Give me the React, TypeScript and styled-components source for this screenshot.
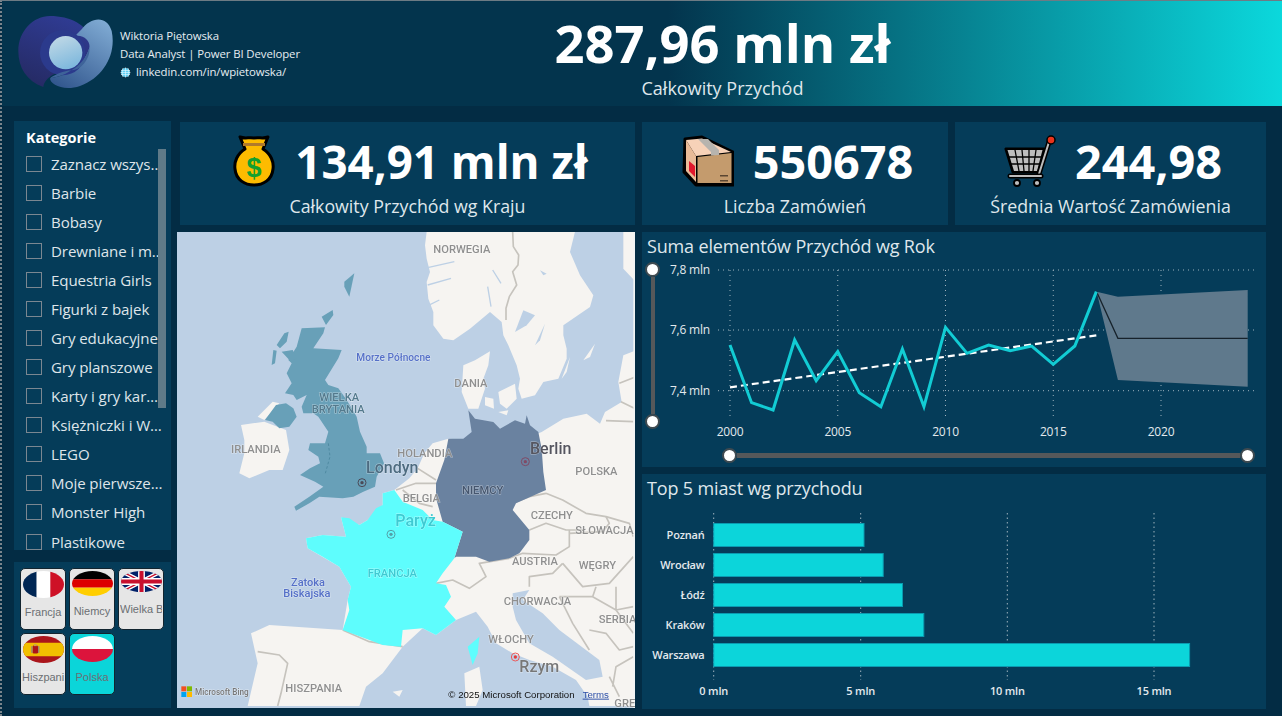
import React from "react";
import styled, { createGlobalStyle } from "styled-components";

const FONT = `"Open Sans", "Noto Sans", sans-serif`;

const GlobalStyle = createGlobalStyle`
  html, body {
    margin: 0;
    padding: 0;
    background: #032c44;
    font-family: ${FONT};
  }
  * {
    box-sizing: border-box;
  }
`;

const categories = [
  "Zaznacz wszystko",
  "Barbie",
  "Bobasy",
  "Drewniane i modele",
  "Equestria Girls",
  "Figurki z bajek",
  "Gry edukacyjne",
  "Gry planszowe",
  "Karty i gry karciane",
  "Księżniczki i Wróżki",
  "LEGO",
  "Moje pierwsze zabawki",
  "Monster High",
  "Plastikowe",
];

// lata 2000-2017, wartosci w pikselach ekranu
const revenue = [345, 518, 540, 330, 452, 365, 488, 530, 357, 530, 292, 370, 345, 362, 348, 403, 348, 185];
const yearX = (i: number) => 70 + i * 21.55;
const linePoints = revenue.map((v, i) => `${yearX(i)},${v / 3 + 230 - 262}`).join(" ");

const cities = [
  { name: "Poznań", end: 864 },
  { name: "Wrocław", end: 883.2 },
  { name: "Łódź", end: 902.5 },
  { name: "Kraków", end: 923.8 },
  { name: "Warszawa", end: 1189.6 },
];

const Page = styled.div`
  position: relative;
  width: 1282px;
  height: 716px;
  overflow: hidden;
  background: #032c44;
  border-top: 1px solid #6d7b84;
  border-left: 2px dotted #7a858c;
`;

const Header = styled.header`
  height: 105px;
  display: flex;
  align-items: flex-start;
  background: linear-gradient(90deg, #03344d 0%, #03344d 52%, #0bd8dc 100%);
`;

const Brand = styled.div`
  width: 500px;
  display: flex;
  align-items: flex-start;
  padding: 14px 0 0 16px;
  gap: 6px;
`;

const Logo = styled.svg`
  width: 96px;
  height: 76px;
  flex: none;
`;

const BrandText = styled.div`
  display: flex;
  flex-direction: column;
  padding-top: 12px;
  color: #e6edf2;
  font-size: 11.4px;
  line-height: 18px;
  font-weight: 500;
  letter-spacing: -0.1px;
`;

const LinkRow = styled.div`
  display: flex;
  align-items: center;
  gap: 5px;
`;

const Total = styled.div`
  width: 441px;
  display: flex;
  flex-direction: column;
  align-items: center;
`;

const TotalValue = styled.div`
  color: #fff;
  font-size: 52.5px;
  line-height: 68px;
  margin-top: 8px;
  font-weight: 700;
  white-space: nowrap;
`;

const TotalLabel = styled.div`
  color: #dfe7ec;
  font-size: 18px;
  line-height: 24px;
  margin-top: -1px;
`;

const Main = styled.main`
  display: grid;
  grid-template-columns: 157px 1fr;
  column-gap: 6px;
  padding: 15px 0 0 12px;
`;

const Side = styled.aside`
  display: flex;
  flex-direction: column;
  gap: 12px;
`;

const Panel = styled.section`
  background: #053c59;
`;

const CategoryPanel = styled(Panel)`
  position: relative;
  height: 429px;
  overflow: hidden;
  padding: 7px 0 0 12px;
`;

const SlicerTitle = styled.div`
  color: #fff;
  font-size: 14.5px;
  font-weight: 700;
  line-height: 20px;
  margin-bottom: 1px;
`;

const CategoryRow = styled.div`
  display: flex;
  align-items: center;
  height: 29.08px;
  gap: 9px;
`;

const Checkbox = styled.span`
  width: 16px;
  height: 16px;
  flex: none;
  border: 1px solid #7b8791;
`;

const CategoryName = styled.span`
  width: 113px;
  color: #dfe5ea;
  font-size: 15.1px;
  letter-spacing: -0.1px;
  white-space: nowrap;
  overflow: hidden;
  text-overflow: ellipsis;
`;

const ScrollThumb = styled.div`
  position: absolute;
  left: 144px;
  top: 28px;
  width: 8px;
  height: 259px;
  background: #5f7a88;
`;

const FlagPanel = styled(Panel)`
  height: 146px;
  padding: 6px 0 0 6px;
  display: grid;
  grid-template-columns: repeat(3, 46px);
  grid-auto-rows: 62px;
  column-gap: 3px;
  row-gap: 3px;
`;

const FlagTile = styled.button<{ $active?: boolean }>`
  display: flex;
  flex-direction: column;
  align-items: center;
  padding: 2px 1px 0;
  overflow: hidden;
  border: 1px solid #12242f;
  border-radius: 5px;
  background: ${(p) => (p.$active ? "#0bd5d9" : "#e6e6e6")};
`;

const FlagShape = styled.svg<{ $h: number }>`
  width: 41px;
  height: ${(p) => p.$h}px;
  flex: none;
  border-radius: 50%;
`;

const FlagName = styled.span`
  flex: 1;
  width: 100%;
  display: flex;
  align-items: center;
  justify-content: center;
  padding-bottom: 3px;
  font-family: "Liberation Sans", Arial, sans-serif;
  font-size: 11px;
  color: #6b6f73;
  white-space: nowrap;
  overflow: hidden;
`;

const FlagNameClipped = styled(FlagName)`
  justify-content: flex-start;
`;

const Content = styled.div`
  display: flex;
  flex-direction: column;
`;

const KpiRow = styled.div`
  height: 103px;
  margin: 1px 0 0 3px;
  display: grid;
  grid-template-columns: 455px 306px 311px;
  column-gap: 7px;
  column-gap: 7px;
`;

const Kpi = styled(Panel)`
  display: flex;
  flex-direction: column;
  align-items: center;
  justify-content: flex-start;
  padding-top: 7px;
`;

const KpiMain = styled.div<{ $gap: number; $shift: number }>`
  display: flex;
  align-items: center;
  gap: ${(p) => p.$gap}px;
  height: 64px;
  margin-left: ${(p) => p.$shift}px;
`;

const KpiIcon = styled.svg<{ $w: number }>`
  width: ${(p) => p.$w}px;
  height: 52px;
  flex: none;
`;

const KpiValue = styled.div<{ $size: number }>`
  color: #fff;
  font-size: ${(p) => p.$size}px;
  font-weight: 700;
  white-space: nowrap;
`;

const KpiLabel = styled.div`
  color: #dfe7ec;
  font-size: 17.8px;
  line-height: 24px;
  margin-top: 1px;
  white-space: nowrap;
`;

const Lower = styled.div`
  margin-top: 7px;
  display: grid;
  grid-template-columns: 458px 624px;
  column-gap: 7px;
`;

const MapFrame = styled.svg`
  display: block;
  width: 458px;
  height: 476px;
  background: #bdd0e5;
  filter: blur(0.35px);
`;

const Charts = styled.div`
  display: flex;
  flex-direction: column;
  gap: 7px;
`;

const ChartPanel = styled(Panel)`
  height: 235px;
  display: flex;
  flex-direction: column;
`;

const ChartTitle = styled.div`
  height: 30px;
  padding: 2px 0 0 5px;
  color: #dfe7ec;
  font-size: 18px;
  line-height: 24px;
  letter-spacing: -0.15px;
`;

const ChartBody = styled.div`
  display: flex;
  height: 178px;
`;

const VSlider = styled.div`
  width: 15px;
  height: 167px;
  margin-left: 3px;
  flex: none;
  display: flex;
  flex-direction: column;
  align-items: center;
`;

const HSlider = styled.div`
  margin: 8px 11px 0 80px;
  display: flex;
  align-items: center;
`;

const Thumb = styled.span`
  width: 15px;
  height: 15px;
  flex: none;
  border-radius: 50%;
  background: #fff;
  border: 2px solid #3f4a50;
`;

const VTrack = styled.span`
  width: 4px;
  flex: 1;
  background: #55585a;
`;

const HTrack = styled.span`
  height: 5px;
  flex: 1;
  background: #55585a;
`;

const PlotSvg = styled.svg`
  display: block;
  flex: none;
`;

const AxisText = styled.text<{ $strong?: boolean }>`
  font-family: ${FONT};
  font-size: ${(p) => (p.$strong ? 11 : 12)}px;
  font-weight: ${(p) => (p.$strong ? 600 : 400)};
  fill: #e3e9ed;
  letter-spacing: -0.2px;
`;

const MapLabel = styled.text<{ $color?: string; $size?: number }>`
  font-family: Roboto, "Liberation Sans", sans-serif;
  font-size: ${(p) => p.$size ?? 33.5}px;
  font-weight: 500;
  fill: ${(p) => p.$color ?? "#8f8f8f"};
  stroke: rgba(255, 255, 255, 0.45);
  stroke-width: 3px;
  paint-order: stroke;
`;

const Attribution = styled.text<{ $link?: boolean }>`
  font-family: "Liberation Sans", Arial, sans-serif;
  font-size: 29px;
  fill: ${(p) => (p.$link ? "#2c4fa8" : "#111")};
  text-decoration: ${(p) => (p.$link ? "underline" : "none")};
`;

const MoneyBag = () => (
  <KpiIcon $w={42} viewBox="0 0 42 52">
    <path
      d="M7 2 C12 4 16 2 21 3 C26 2 30 4 35 2 L30 14 C38 19 41 27 40 34 C39 45 30 50 21 50 C12 50 3 45 2 34 C1 27 4 19 12 14 Z"
      fill="#fdbb00"
      stroke="#000"
      strokeWidth="3"
      strokeLinejoin="round"
    />
    <rect x="10" y="8" width="22" height="3" fill="#b07a2c" />
    <text x="21" y="42" textAnchor="middle" fontFamily="Liberation Sans, sans-serif" fontSize="27" fontWeight="700" fill="#12a02e">
      $
    </text>
  </KpiIcon>
);

const Parcel = () => (
  <KpiIcon $w={52} viewBox="0 0 52 52">
    <path d="M3 4 L20 2 L51 17 L51 50 L14 50 L2 37 Z" fill="#000" stroke="#000" strokeWidth="3" strokeLinejoin="round" />
    <path d="M4 5 L20 3.5 L49 17 L14 21 Z" fill="#f7d2b8" />
    <path d="M4 5 L14 21 L14 47 L4 36 Z" fill="#e8bb98" />
    <path d="M15.5 22 L49.5 18 L49.5 48 L15.5 48 Z" fill="#c49b6d" />
    <path d="M16 4 L26 4 L37 15 L37 20 L29 20.5 L29 17 Z" fill="#b7b4ae" />
    <path d="M7 26 L13 31 L13 42 L7 36 Z" fill="#e0182d" />
    <rect x="38" y="40" width="8" height="1.5" fill="#5a4632" />
    <rect x="38" y="45" width="8" height="1.5" fill="#5a4632" />
  </KpiIcon>
);

const Cart = () => (
  <KpiIcon $w={52} viewBox="0 0 52 52">
    <path d="M2 14 L40 14 L34 37 L9 37 Z" fill="#000" stroke="#000" strokeWidth="3" strokeLinejoin="round" />
    <path d="M3.5 15 L38.5 15 L33 36 L10 36 Z" fill="#bdbdbd" />
    <g stroke="#000" strokeWidth="1.3">
      <path d="M11 15 L15 36 M18 15 L20 36 M25 15 L25 36 M32 15 L29 36" />
      <path d="M5 22 L37 22 M7 29 L35 29" />
    </g>
    <path d="M35 39 L45 7" stroke="#000" strokeWidth="5" fill="none" strokeLinecap="round" />
    <path d="M35 39 L45 7" stroke="#bdbdbd" strokeWidth="2" fill="none" strokeLinecap="round" />
    <circle cx="47" cy="5" r="4" fill="#e8331c" stroke="#000" strokeWidth="1.5" />
    <path d="M6 41 L37 41" stroke="#000" strokeWidth="5" strokeLinecap="round" />
    <path d="M6 41 L37 41" stroke="#bdbdbd" strokeWidth="2" strokeLinecap="round" />
    <circle cx="13" cy="48" r="3" fill="#bdbdbd" stroke="#000" strokeWidth="1.8" />
    <circle cx="33" cy="48" r="3" fill="#bdbdbd" stroke="#000" strokeWidth="1.8" />
  </KpiIcon>
);

const Globe = () => (
  <svg width="11" height="11" viewBox="0 0 11 11">
    <circle cx="5.5" cy="5.5" r="5" fill="#5fd0f5" stroke="#0b1d2a" strokeWidth="0.8" />
    <path d="M1 3.5 H10 M0.6 5.5 H10.4 M1 7.5 H10 M5.5 0.5 V10.5 M3 1 C2 4 2 7 3 10 M8 1 C9 4 9 7 8 10" stroke="#e8f8ff" strokeWidth="0.6" fill="none" />
  </svg>
);

const BrandLogo = () => (
  <Logo viewBox="54 44 288 224">
    <defs>
      <linearGradient id="logoRight" x1="0.8" y1="0" x2="0.2" y2="1">
        <stop offset="0" stopColor="#7ea9d2" />
        <stop offset="1" stopColor="#33588f" />
      </linearGradient>
      <linearGradient id="logoLeft" x1="0.6" y1="0" x2="0.2" y2="1">
        <stop offset="0" stopColor="#2f3b92" />
        <stop offset="1" stopColor="#252a63" />
      </linearGradient>
      <linearGradient id="logoCore" x1="0.3" y1="0" x2="0.7" y2="1">
        <stop offset="0" stopColor="#bfd8e6" />
        <stop offset="1" stopColor="#7ab6dc" />
      </linearGradient>
    </defs>
    <path d="M150 45 C210 45 262 70 275 120 C285 170 250 208 215 208 C170 210 135 228 130 258 C80 240 55 200 55 150 C55 90 100 45 150 45 Z" fill="url(#logoLeft)" />
    <path d="M245 85 C270 50 320 40 335 90 C350 160 310 230 240 255 C190 272 150 250 150 232 C200 225 255 190 268 140 C272 125 255 100 225 105 Z" fill="url(#logoRight)" />
    <circle cx="188" cy="155" r="68" fill="#2b3a8c" />
    <path d="M150 232 C200 225 255 190 268 140 C272 165 250 205 215 208 C190 210 165 220 150 232 Z" fill="#3e6399" />
    <circle cx="197" cy="155" r="50" fill="url(#logoCore)" />
  </Logo>
);

// mapa rysowana we wspolrzednych 3x, zeby latwo porownac z crop-em
const EuropeMap = () => (
  <MapFrame viewBox="3 6 1374 1428">
    <g fill="#f6f4f1">
      <path d="M752 5 L747 46 L752 86 L762 126 L752 156 L757 206 L772 246 L772 286 L802 326 L832 331 L882 296 L942 246 L977 276 L982 316 L997 346 L1022 406 L1032 446 L1027 476 L1037 506 L1077 496 L1102 456 L1147 446 L1172 386 L1172 356 L1162 316 L1162 286 L1242 231 L1252 196 L1212 136 L1182 66 L1197 5 Z" />
      <path d="M1342 5 L1380 5 L1380 156 L1342 116 Z" />
      <path d="M862 406 L897 391 L942 364 L937 406 L922 446 L927 476 L907 536 L877 536 L857 486 Z" />
      <path d="M927 501 L952 506 L954 536 L927 526 Z M967 486 L1017 461 L1022 506 L992 536 L972 521 Z M967 546 L997 541 L992 556 Z" />
      <path d="M1222 391 L1257 341 L1242 381 Z M1157 446 L1182 381 L1172 426 Z" />
      <path d="M1380 361 L1342 376 L1327 456 L1337 516 L1287 546 L1272 581 L1232 551 L1162 566 L1097 606 L1062 620 L1000 640 L877 630 L817 626 L770 640 L745 670 L725 715 L700 745 L655 780 L620 790 L620 825 L575 870 L550 885 L495 862 L510 920 L440 915 L390 925 L395 955 L490 1010 L525 1070 L515 1110 L500 1200 L280 1185 L225 1210 L245 1300 L215 1428 L1380 1428 Z" />
      <path d="M195 585 L265 575 L330 600 L340 660 L320 720 L280 720 L220 745 L190 730 L205 670 L205 630 Z" />
      <path d="M245 560 L290 515 L310 520 L265 570 Z" />
    </g>
    <g fill="#bdd0e5">
      <path d="M1017 306 L1042 241 L1077 256 L1052 286 Z" />
      <path d="M1077 346 L1107 281 L1092 331 Z" />
      <path d="M1092 121 L1112 131 L1102 136 Z" />
      <path d="M550 1428 L570 1370 L620 1330 L680 1250 L740 1195 L780 1215 L840 1170 L900 1145 L935 1190 L960 1240 L1010 1270 L1060 1290 L1130 1310 L1200 1350 L1235 1400 L1240 1428 Z" />
      <path d="M1010 1090 L1060 1080 L1040 1110 L1100 1150 L1150 1200 L1270 1290 L1280 1340 L1230 1350 L1130 1280 L1060 1240 L1020 1170 L1010 1130 Z" />
    </g>
    <g fill="none" stroke="#bdd0e5" strokeWidth="4">
      <path d="M745 115 L835 95 M755 165 L825 145 M750 230 L790 210 M950 120 L975 160 M935 170 L945 230" />
    </g>
    <path d="M865 1330 L910 1310 L920 1380 L900 1428 L870 1428 Z M650 1385 L680 1380 L670 1400 Z" fill="#f6f4f1" />
    <g fill="none" stroke="#c6c3bd" strokeWidth="5" strokeLinejoin="round">
      <path d="M1010 5 L1012 50 L1028 75 L1026 105 L1010 125 L1022 165 L1000 200 L990 235 L990 270" />
      <path d="M1380 440 L1330 460 M1335 515 L1375 535 M1290 572 L1372 575" />
      <path d="M1110 790 L1160 810 L1230 850 L1290 860 L1360 880 L1372 920" />
      <path d="M1010 820 L1060 800 L1110 790 M1060 900 L1110 880 L1170 900 L1220 900" />
      <path d="M1000 985 L1040 970 L1140 975 L1180 950 L1180 900 M1290 860 L1300 880 L1280 905 L1180 910" />
      <path d="M1160 1000 L1220 1070 L1300 1060 L1372 980" />
      <path d="M1160 1000 L1130 1030 L1060 1040 L1060 1070 M780 1060 L830 1050 L880 1075 L930 1040 L910 1000 L1000 985" />
      <path d="M1150 1100 L1250 1100 L1320 1140 L1372 1130 M1150 1100 L1190 1180 L1240 1260 M1260 1070 L1250 1100 M1320 1070 L1320 1140 L1372 1210 M1240 1200 L1290 1210 L1330 1260 L1372 1250" />
      <path d="M1300 1340 L1330 1400 M1372 1280 L1320 1310 L1310 1370" />
      <path d="M245 1265 L310 1275 L335 1300 L315 1390 L305 1428" />
      <path d="M500 1200 L580 1235 L680 1250" />
      <path d="M660 780 L720 760 L780 760 M680 780 L730 820 L770 830 M725 715 L780 750" />
    </g>
    <g fill="#68a0b8">
      <path d="M377 295 L447 292 L442 310 L412 355 L497 360 L487 385 L447 450 L457 465 L487 475 L512 510 L542 560 L552 605 L572 650 L572 670 L612 670 L624 700 L602 740 L597 770 L562 785 L532 800 L500 805 L430 800 L400 820 L360 842 L355 830 L400 800 L442 770 L417 755 L372 735 L402 715 L432 700 L427 680 L397 660 L402 640 L447 640 L457 605 L427 560 L412 550 L382 550 L377 530 L392 495 L362 510 L352 495 L327 490 L347 460 L332 430 L347 400 L337 390 L362 350 Z" />
      <path d="M267 570 L300 525 L330 520 L352 535 L362 560 L340 590 L310 595 L290 575 Z" />
      <path d="M505 155 L535 130 L520 200 L505 170 Z" />
      <path d="M287 405 L292 360 L302 362 L297 400 Z M302 345 L325 310 L338 305 L332 335 L312 355 Z M317 365 L350 360 L362 385 L345 395 Z M437 260 L470 240 L472 255 L450 285 Z" />
    </g>
    <path d="M457 640 L462 680 L448 730" fill="none" stroke="#4f8aa2" strokeWidth="3" strokeDasharray="8 6" />
    <path
      d="M877 541 L897 566 L952 576 L972 596 L1017 571 L1047 581 L1052 556 L1062 586 L1087 606 L1097 656 L1102 726 L1110 780 L1020 820 L1010 840 L1060 900 L1060 930 L1030 970 L1000 985 L940 995 L900 980 L840 980 L835 985 L860 905 L800 875 L780 805 L780 760 L805 690 L817 626 L862 626 L887 606 Z"
      fill="#6a82a0"
    />
    <path
      d="M655 780 L680 815 L740 840 L770 870 L800 875 L860 905 L835 985 L800 1030 L780 1060 L810 1065 L825 1100 L805 1130 L840 1170 L780 1215 L740 1195 L680 1200 L675 1250 L620 1245 L500 1200 L520 1140 L515 1110 L525 1070 L490 1010 L440 980 L395 955 L390 925 L440 915 L510 920 L495 862 L520 865 L550 885 L575 870 L600 835 L620 825 L620 790 Z"
      fill="#5efdfd"
    />
    <path d="M875 1250 L910 1220 L905 1270 L890 1305 Z" fill="#5efdfd" />
    <rect x="1372" y="0" width="8" height="1440" fill="#f2f3f4" />

    <MapLabel x="772" y="70">NORWEGIA</MapLabel>
    <MapLabel x="541" y="394" $color="#5570c8" $size={30.5}>Morze Północne</MapLabel>
    <MapLabel x="835" y="471">DANIA</MapLabel>
    <MapLabel x="430" y="513" $color="#53798c">WIELKA</MapLabel>
    <MapLabel x="407" y="550" $color="#53798c">BRYTANIA</MapLabel>
    <MapLabel x="165" y="670">IRLANDIA</MapLabel>
    <MapLabel x="664" y="682">HOLANDIA</MapLabel>
    <MapLabel x="1062" y="672" $color="#55555f" $size={48}>Berlin</MapLabel>
    <MapLabel x="570" y="728" $color="#4d6b80" $size={48}>Londyn</MapLabel>
    <MapLabel x="1198" y="735">POLSKA</MapLabel>
    <MapLabel x="680" y="815">BELGIA</MapLabel>
    <MapLabel x="858" y="792" $color="#46566e">NIEMCY</MapLabel>
    <MapLabel x="1064" y="868">CZECHY</MapLabel>
    <MapLabel x="658" y="888" $color="#3ecad2" $size={48}>Paryż</MapLabel>
    <MapLabel x="1198" y="912">SŁOWACJA</MapLabel>
    <MapLabel x="1008" y="1005">AUSTRIA</MapLabel>
    <MapLabel x="1208" y="1018">WĘGRY</MapLabel>
    <MapLabel x="575" y="1042" $color="#3ecad2">FRANCJA</MapLabel>
    <MapLabel x="345" y="1068" $color="#5570c8" $size={33}>Zatoka</MapLabel>
    <MapLabel x="322" y="1100" $color="#5570c8" $size={33}>Biskajska</MapLabel>
    <MapLabel x="983" y="1126">CHORWACJA</MapLabel>
    <MapLabel x="1268" y="1180">SERBIA</MapLabel>
    <MapLabel x="937" y="1240">WŁOCHY</MapLabel>
    <MapLabel x="1030" y="1325" $color="#777" $size={48}>Rzym</MapLabel>
    <MapLabel x="328" y="1385">HISZPANIA</MapLabel>
    <MapLabel x="1315" y="1430">GRE</MapLabel>

    <g fill="none">
      <circle cx="1048" cy="695" r="12" stroke="#804a66" strokeWidth="3" />
      <circle cx="558" cy="758" r="12" stroke="#4a4a58" strokeWidth="3" />
      <circle cx="645" cy="913" r="12" stroke="#53a0a8" strokeWidth="3" />
      <circle cx="1018" cy="1281" r="12" stroke="#ec5a5a" strokeWidth="3" />
    </g>
    <circle cx="1048" cy="695" r="5" fill="#804a66" />
    <circle cx="558" cy="758" r="5" fill="#4a4a58" />
    <circle cx="645" cy="913" r="5" fill="#53a0a8" />
    <circle cx="1018" cy="1281" r="5" fill="#e53c3c" />

    <rect x="16" y="1369" width="15" height="15" fill="#f25022" />
    <rect x="33" y="1369" width="15" height="15" fill="#7fba00" />
    <rect x="16" y="1386" width="15" height="15" fill="#00a4ef" />
    <rect x="33" y="1386" width="15" height="15" fill="#ffb900" />
    <MapLabel x="57" y="1395" $color="#777" $size={24.5}>Microsoft Bing</MapLabel>
    <Attribution x="817" y="1403">© 2025 Microsoft Corporation</Attribution>
    <Attribution x="1220" y="1403" $link>Terms</Attribution>
  </MapFrame>
);

const LinePlot = () => {
  const gridX = [70, 177.75, 285.5, 393.25, 501];
  const gridY = [8, 68, 128.7];
  const labels = ["7,8 mln", "7,6 mln", "7,4 mln"];
  return (
    <PlotSvg width={606} height={178} viewBox="0 0 606 178">
      {gridY.map((y) => (
        <line key={y} x1={58} x2={596} y1={y} y2={y} stroke="#9fb2bd" strokeDasharray="1 4" />
      ))}
      {gridX.map((x) => (
        <line key={x} x1={x} x2={x} y1={8} y2={158} stroke="#9fb2bd" strokeDasharray="1 4" />
      ))}
      {labels.map((t, i) => (
        <AxisText key={t} x={50} y={gridY[i] + 4} textAnchor="end">
          {t}
        </AxisText>
      ))}
      <polygon points="436.6,29.7 457.9,34.7 587.7,28 587.7,124.7 457.9,118 436.6,29.7" fill="#5f798c" />
      <polyline points="436.6,29.7 457.9,76.3 587.7,76.3" fill="none" stroke="#16222b" strokeWidth="1.3" />
      <line x1={70} y1={125.3} x2={436.6} y2={73.3} stroke="#fff" strokeWidth="2.2" strokeDasharray="7 4" />
      <polyline points={linePoints} fill="none" stroke="#12ccd4" strokeWidth="3" strokeLinejoin="miter" />
      {[2000, 2005, 2010, 2015, 2020].map((y, i) => (
        <AxisText key={y} x={gridX[i]} y={174} textAnchor="middle">
          {y}
        </AxisText>
      ))}
    </PlotSvg>
  );
};

const BarPlot = () => (
  <PlotSvg width={624} height={205} viewBox="0 0 624 205">
    {[71.7, 218.7, 365.3, 512].map((x) => (
      <line key={x} x1={x} x2={x} y1={9} y2={176} stroke="#9fb2bd" strokeDasharray="1.5 3" />
    ))}
    {cities.map((c, i) => (
      <g key={c.name}>
        <rect x={71.7} y={19.5 + i * 30} width={c.end - 713.7} height={23} fill="#0cd5da" stroke="#0a9bb0" />
        <AxisText $strong x={62.5} y={35 + i * 30} textAnchor="end">
          {c.name}
        </AxisText>
      </g>
    ))}
    {["0 mln", "5 mln", "10 mln", "15 mln"].map((t, i) => (
      <AxisText $strong key={t} x={[71.7, 218.7, 365.3, 512][i]} y={191} textAnchor="middle">
        {t}
      </AxisText>
    ))}
  </PlotSvg>
);

export default function App() {
  return (
    <Page>
      <GlobalStyle />
      <Header>
        <Brand>
          <BrandLogo />
          <BrandText>
            <span>Wiktoria Piętowska</span>
            <span>Data Analyst | Power BI Developer</span>
            <LinkRow>
              <Globe />
              linkedin.com/in/wpietowska/
            </LinkRow>
          </BrandText>
        </Brand>
        <Total>
          <TotalValue>287,96 mln zł</TotalValue>
          <TotalLabel>Całkowity Przychód</TotalLabel>
        </Total>
      </Header>
      <Main>
        <Side>
          <CategoryPanel>
            <SlicerTitle>Kategorie</SlicerTitle>
            {categories.map((c) => (
              <CategoryRow key={c}>
                <Checkbox />
                <CategoryName>{c}</CategoryName>
              </CategoryRow>
            ))}
            <ScrollThumb />
          </CategoryPanel>
          <FlagPanel>
            <FlagTile>
              <FlagShape $h={27} viewBox="0 0 3 2" preserveAspectRatio="none">
                <rect width="1" height="2" fill="#002654" />
                <rect x="1" width="1" height="2" fill="#fff" />
                <rect x="2" width="1" height="2" fill="#ce1126" />
              </FlagShape>
              <FlagName>Francja</FlagName>
            </FlagTile>
            <FlagTile>
              <FlagShape $h={25} viewBox="0 0 3 3" preserveAspectRatio="none">
                <rect width="3" height="1" fill="#000" />
                <rect y="1" width="3" height="1" fill="#dd0000" />
                <rect y="2" width="3" height="1" fill="#ffce00" />
              </FlagShape>
              <FlagName>Niemcy</FlagName>
            </FlagTile>
            <FlagTile>
              <FlagShape $h={21} viewBox="0 0 60 30" preserveAspectRatio="none">
                <rect width="60" height="30" fill="#012169" />
                <path d="M0 0 L60 30 M60 0 L0 30" stroke="#fff" strokeWidth="6" />
                <path d="M0 0 L60 30 M60 0 L0 30" stroke="#c8102e" strokeWidth="2" />
                <path d="M30 0 V30 M0 15 H60" stroke="#fff" strokeWidth="10" />
                <path d="M30 0 V30 M0 15 H60" stroke="#c8102e" strokeWidth="6" />
              </FlagShape>
              <FlagNameClipped>Wielka Brytania</FlagNameClipped>
            </FlagTile>
            <FlagTile>
              <FlagShape $h={27} viewBox="0 0 60 40" preserveAspectRatio="none">
                <rect width="60" height="40" fill="#aa151b" />
                <rect y="10" width="60" height="20" fill="#f1bf00" />
                <rect x="14" y="14" width="8" height="12" rx="2" fill="#ad1519" />
                <rect x="16" y="12" width="4" height="3" fill="#c8a050" />
                <rect x="12" y="15" width="2" height="10" fill="#9a8a70" />
                <rect x="22" y="15" width="2" height="10" fill="#9a8a70" />
              </FlagShape>
              <FlagNameClipped>Hiszpania</FlagNameClipped>
            </FlagTile>
            <FlagTile $active>
              <FlagShape $h={26} viewBox="0 0 2 2" preserveAspectRatio="none">
                <rect width="2" height="1" fill="#fff" />
                <rect y="1" width="2" height="1" fill="#dc143c" />
              </FlagShape>
              <FlagName>Polska</FlagName>
            </FlagTile>
          </FlagPanel>
        </Side>
        <Content>
          <KpiRow>
            <Kpi>
              <KpiMain $gap={20} $shift={6}>
                <MoneyBag />
                <KpiValue $size={45.7}>134,91 mln zł</KpiValue>
              </KpiMain>
              <KpiLabel>Całkowity Przychód wg Kraju</KpiLabel>
            </Kpi>
            <Kpi>
              <KpiMain $gap={19} $shift={5}>
                <Parcel />
                <KpiValue $size={46.8}>550678</KpiValue>
              </KpiMain>
              <KpiLabel>Liczba Zamówień</KpiLabel>
            </Kpi>
            <Kpi>
              <KpiMain $gap={19} $shift={5}>
                <Cart />
                <KpiValue $size={46.8}>244,98</KpiValue>
              </KpiMain>
              <KpiLabel>Średnia Wartość Zamówienia</KpiLabel>
            </Kpi>
          </KpiRow>
          <Lower>
            <EuropeMap />
            <Charts>
              <ChartPanel>
                <ChartTitle>Suma elementów Przychód wg Rok</ChartTitle>
                <ChartBody>
                  <VSlider>
                    <Thumb />
                    <VTrack />
                    <Thumb />
                  </VSlider>
                  <LinePlot />
                </ChartBody>
                <HSlider>
                  <Thumb />
                  <HTrack />
                  <Thumb />
                </HSlider>
              </ChartPanel>
              <ChartPanel>
                <ChartTitle>Top 5 miast wg przychodu</ChartTitle>
                <BarPlot />
              </ChartPanel>
            </Charts>
          </Lower>
        </Content>
      </Main>
    </Page>
  );
}
